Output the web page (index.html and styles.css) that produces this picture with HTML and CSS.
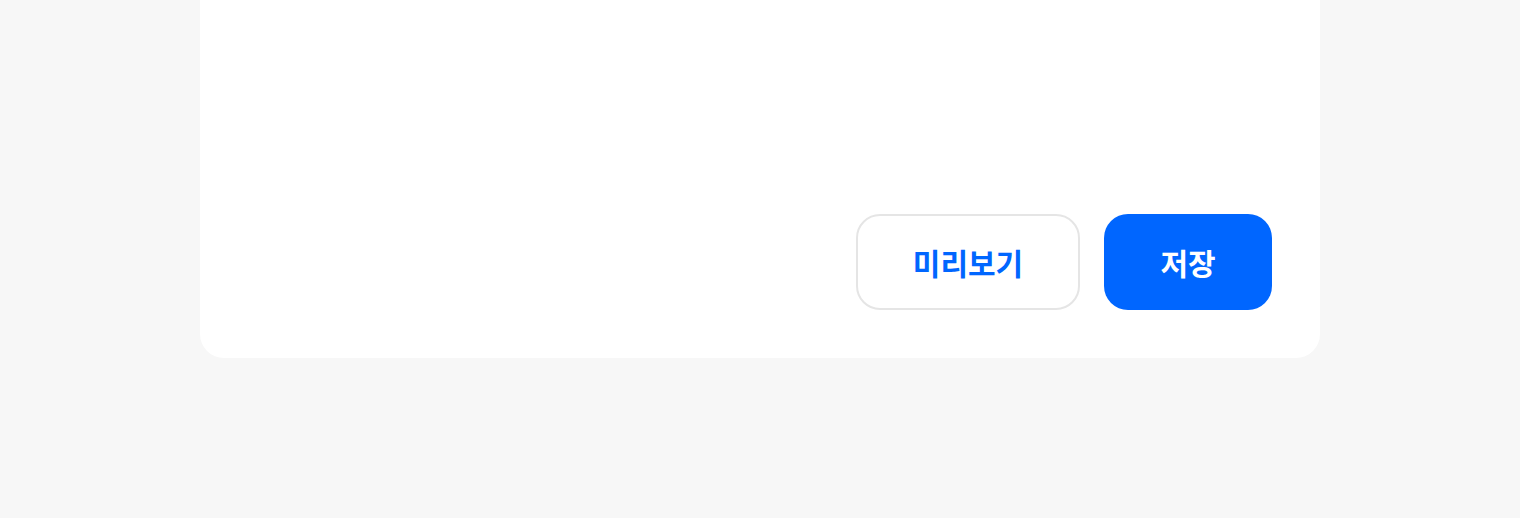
FILE: index.html
```html
<!DOCTYPE html>
<html lang="ko">
<head>
<meta charset="utf-8">
<title>저장</title>
<link rel="stylesheet" href="styles.css">
</head>
<body>
<div class="page">
  <section class="card">
    <div class="card-body"></div>
    <div class="actions">
      <button class="btn btn-outline" type="button">미리보기</button>
      <button class="btn btn-primary" type="button">저장</button>
    </div>
  </section>
</div>
</body>
</html>
```
FILE: styles.css
```css
html, body {
  margin: 0;
  padding: 0;
  background: #f7f7f7;
}
body {
  font-family: "Noto Sans CJK KR", "Noto Sans", sans-serif;
}
.page {
  display: flex;
  justify-content: center;
  padding-bottom: 160px;
}
.card {
  width: 1120px;
  box-sizing: border-box;
  background: #ffffff;
  border-radius: 0 0 24px 24px;
  padding: 0 48px 48px;
  display: flex;
  flex-direction: column;
}
.card-body {
  height: 214px;
}
.actions {
  display: flex;
  justify-content: flex-end;
  gap: 24px;
}
.btn {
  height: 96px;
  box-sizing: border-box;
  border-radius: 24px;
  font-family: inherit;
  font-size: 30px;
  font-weight: 600;
  display: flex;
  align-items: center;
  justify-content: center;
  cursor: pointer;
  line-height: 1;
  padding: 0;
}
.btn-outline {
  width: 224px;
  background: #ffffff;
  border: 2px solid #e5e5e5;
  color: #0066ff;
}
.btn-primary {
  width: 168px;
  background: #0066ff;
  border: 0;
  color: #ffffff;
}
```
